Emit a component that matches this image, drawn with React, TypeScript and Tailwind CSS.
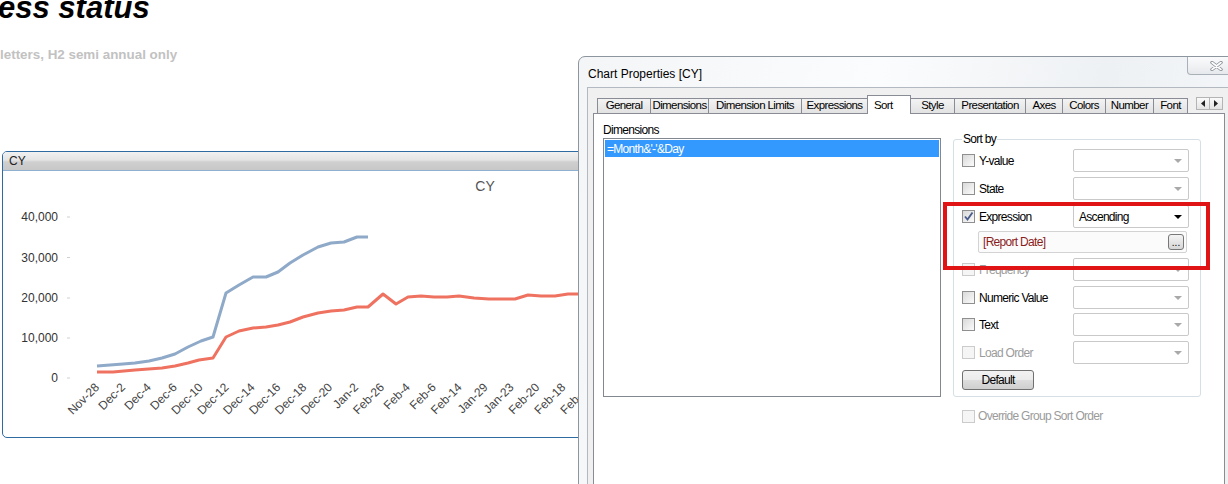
import React from "react";

const bluePts =
  "97,366 110,365 123,364 135,363 149,361 162,358 175,354 188,347 201,341 213,337 226,293 239,285 253,277 266,277 278,272 290,263 303,255 318,247 331,243 344,242 357,237 368,237";
const redPts =
  "97,372 113,372 135,370 162,368 175,366 188,363 199,360 213,358 226,337 239,331 253,328 266,327 278,325 290,322 303,317 318,313 331,311 344,310 357,307 368,307 383,294 396,304 408,297 421,296 434,297 447,297 459,296 474,298 489,299 504,299 515,299 528,295 541,296 555,296 568,294 580,294 610,293";

const xLabels = [
  "Nov-28", "Dec-2", "Dec-4", "Dec-6", "Dec-10", "Dec-12", "Dec-14", "Dec-16", "Dec-18", "Dec-20",
  "Jan-2", "Feb-26", "Feb-4", "Feb-6", "Feb-14", "Jan-29", "Jan-23", "Feb-20", "Feb-18", "Feb-12",
];

const yTicks = [
  { label: "40,000", y: 217 },
  { label: "30,000", y: 257.5 },
  { label: "20,000", y: 298 },
  { label: "10,000", y: 338 },
  { label: "0", y: 378 },
];

const tabs: { name: string; w: number; active?: boolean }[] = [
  { name: "General", w: 53 },
  { name: "Dimensions", w: 58 },
  { name: "Dimension Limits", w: 93 },
  { name: "Expressions", w: 66 },
  { name: "Sort", w: 44, active: true },
  { name: "Style", w: 43 },
  { name: "Presentation", w: 71 },
  { name: "Axes", w: 37 },
  { name: "Colors", w: 43 },
  { name: "Number", w: 48 },
  { name: "Font", w: 35 },
];

function Check({ checked = false, disabled = false }: { checked?: boolean; disabled?: boolean }) {
  return (
    <span
      className={`flex h-[13px] w-[13px] shrink-0 items-center justify-center border ${
        disabled
          ? "border-[#cbcbcb] bg-[#f5f5f5]"
          : "border-[#8e8f8f] bg-gradient-to-br from-[#d9d9d9] to-[#fbfbfb]"
      }`}
    >
      {checked && (
        <svg width="11" height="11" viewBox="0 0 11 11">
          <path d="M2 5.5 L4.5 8.5 L9.5 1.5" fill="none" stroke="#4a5d8c" strokeWidth="1.9" />
        </svg>
      )}
    </span>
  );
}

function Combo({ value = "", active = false }: { value?: string; active?: boolean }) {
  return (
    <div className="flex h-[23px] w-[116px] items-center justify-between rounded-[2px] border border-[#c9c9c9] bg-white pl-[5px] pr-[6px]">
      <span>{value}</span>
      <svg width="8" height="4" viewBox="0 0 8 4">
        <path d="M0 0 H8 L4 4 Z" fill={active ? "#000" : "#a9a9a9"} />
      </svg>
    </div>
  );
}

function SortRow({
  label,
  checked,
  disabled,
  value,
  active,
  className = "",
}: {
  label: string;
  checked?: boolean;
  disabled?: boolean;
  value?: string;
  active?: boolean;
  className?: string;
}) {
  return (
    <div className={`flex items-center ${className}`}>
      <div className="flex w-[111px] items-center gap-[4px]">
        <Check checked={checked} disabled={disabled} />
        <span className={disabled ? "text-[#9b9b9b]" : "text-black"}>{label}</span>
      </div>
      <Combo value={value} active={active} />
    </div>
  );
}

export default function App() {
  return (
    <div className="relative h-[484px] w-[1228px] overflow-hidden bg-white font-['Liberation_Sans',Arial,sans-serif]">
      {/* page behind the dialog */}
      <h1 className="-ml-[2px] -mt-[7px] text-[31px] font-bold italic leading-[30px] text-black">
        ess status
      </h1>
      <p className="mt-[24px] text-[13.4px] font-bold leading-[16px] text-[#c2c2c2]">
        letters, H2 semi annual only
      </p>

      <div className="ml-[2px] mt-[88px] h-[287px] w-[640px] overflow-hidden rounded-[5px] border border-[#2f6aa1]">
        <div className="flex h-[19px] items-center border-b border-[#8fb0cf] bg-[linear-gradient(#f1f1f1,#e4e4e4_45%,#cfcfcf_55%,#c8c8c8)] pl-[6px] text-[12px] text-[#222]">
          CY
        </div>
        <svg width="638" height="266" viewBox="3 171 638 266" className="block">
          <text x="485" y="191" textAnchor="middle" fontSize="14" fill="#555" fontFamily="Liberation Sans, Arial">
            CY
          </text>
          {yTicks.map((t) => (
            <g key={t.label}>
              <text x="58" y={t.y + 4} textAnchor="end" fontSize="12" fill="#333" fontFamily="Liberation Sans, Arial">
                {t.label}
              </text>
              <line x1="67" x2="70" y1={t.y} y2={t.y} stroke="#d0d0d0" />
            </g>
          ))}
          <polyline points={bluePts} fill="none" stroke="#8fa9c8" strokeWidth="3" strokeLinejoin="round" />
          <polyline points={redPts} fill="none" stroke="#ef7261" strokeWidth="3" strokeLinejoin="round" />
          {xLabels.map((l, i) => {
            const x = 100 + i * 25.9;
            return (
              <text
                key={l + i}
                x={x}
                y={388}
                textAnchor="end"
                fontSize="12"
                fill="#444"
                fontFamily="Liberation Sans, Arial"
                transform={`rotate(-45 ${x} 388)`}
              >
                {l}
              </text>
            );
          })}
        </svg>
      </div>

      {/* Chart Properties dialog window */}
      <div className="absolute left-[578px] top-[56px] h-[440px] w-[680px] rounded-t-[7px] border border-[#8d959e] bg-[linear-gradient(100deg,#f3f5f7,#fbfcfd_40%,#eef1f4_70%,#f6f8fa)] text-[12px]">
        <div className="flex h-[30px] items-start pl-[9px] pr-[12px]">
          <span className="mt-[8px] text-black">Chart Properties [CY]</span>
          <div className="ml-auto flex h-[18px] w-[58px] items-center justify-center rounded-b-[4px] border border-t-0 border-[#a9b0b8] bg-gradient-to-b from-[#fbfbfc] to-[#e6e9ec]">
            <svg width="13" height="10" viewBox="0 0 13 10">
              <path d="M2 1.5 L11 8.5 M11 1.5 L2 8.5" stroke="#8b9098" strokeWidth="3.4" strokeLinecap="round" />
              <path d="M2 1.5 L11 8.5 M11 1.5 L2 8.5" stroke="#ffffff" strokeWidth="1.6" strokeLinecap="round" />
            </svg>
          </div>
        </div>

        <div className="ml-[8px] h-[420px] border border-[#b3b9c0] bg-[#f0f0f0] pl-[5px] pt-[7px]">
          {/* tabs */}
          <div className="flex h-[18px] items-end pl-[4px] text-[11.5px] tracking-[-0.6px]">
            {tabs.map((t, i) =>
              t.active ? (
                <div
                  key={t.name}
                  style={{ width: t.w }}
                  className="relative z-10 -mb-px flex h-[19px] items-start border border-b-0 border-[#898c95] bg-white pl-[6px] pt-[1px] text-black"
                >
                  {t.name}
                </div>
              ) : (
                <div
                  key={t.name}
                  style={{ width: t.w }}
                  className={`flex h-[15px] items-center justify-center border-t border-[#898c95] bg-gradient-to-b from-[#f3f3f3] to-[#e2e2e2] text-black ${
                    tabs[i - 1]?.active ? "" : "border-l"
                  } ${i === tabs.length - 1 ? "border-r" : ""}`}
                >
                  {t.name}
                </div>
              )
            )}
            <div className="mb-[3px] ml-[8px] flex self-end">
              <div className="flex h-[13px] w-[14px] items-center justify-center border border-[#b4b4b4] bg-gradient-to-b from-[#fafafa] to-[#e4e4e4]">
                <svg width="4" height="7" viewBox="0 0 4 7">
                  <path d="M4 0 V7 L0 3.5 Z" fill="#222" />
                </svg>
              </div>
              <div className="-ml-px flex h-[13px] w-[14px] items-center justify-center border border-[#b4b4b4] bg-gradient-to-b from-[#fafafa] to-[#e4e4e4]">
                <svg width="4" height="7" viewBox="0 0 4 7">
                  <path d="M0 0 V7 L4 3.5 Z" fill="#222" />
                </svg>
              </div>
            </div>
          </div>

          {/* tab panel */}
          <div className="flex h-[400px] w-[632px] border border-[#898c95] bg-white tracking-[-0.7px]">
            <div className="pl-[9px] pt-[9px]">
              <div className="mb-[1px] leading-[14px] text-black">Dimensions</div>
              <div className="h-[259px] w-[338px] border border-[#828790] p-px">
                <div className="flex h-[17px] items-center bg-[#3399ff] pl-[2px] text-white">
                  {"=Month&'-'&Day"}
                </div>
              </div>
            </div>

            <div className="ml-[12px] pt-[18px]">
              <fieldset className="w-[248px] rounded-[3px] border border-[#d5dfe5] px-[8px] pb-[6px]">
                <legend className="px-[1px] leading-[14px] text-black">Sort by</legend>
                <SortRow className="mt-[3px]" label="Y-value" />
                <SortRow className="mt-[5px]" label="State" />
                <SortRow className="mt-[5px]" label="Expression" checked value="Ascending" active />
                <div className="ml-[16px] mt-[3px] flex h-[22px] w-[209px] items-center justify-between rounded-[2px] border border-[#d3d3d3] bg-[#fbfbfb] pl-[4px] pr-[2px]">
                  <span className="text-[#8b1c1c]">[Report Date]</span>
                  <div className="flex h-[16px] w-[16px] items-end justify-center rounded-[3px] border border-[#777] bg-gradient-to-b from-[#f4f4f4] to-[#d6d6d6] text-[10px] leading-[12px] tracking-normal">
                    ...
                  </div>
                </div>
                <SortRow className="mt-[5px]" label="Frequency" disabled />
                <SortRow className="mt-[5px]" label="Numeric Value" />
                <SortRow className="mt-[4px]" label="Text" />
                <SortRow className="mt-[5px]" label="Load Order" disabled />
                <button className="mt-[6px] flex h-[20px] w-[72px] items-center justify-center rounded-[3px] border border-[#707070] bg-[linear-gradient(#f2f2f2,#ebebeb_50%,#dddddd_50%,#cfcfcf)] text-black">
                  Default
                </button>
              </fieldset>
              <div className="ml-[9px] mt-[10px] flex items-center gap-[3px]">
                <Check disabled />
                <span className="text-[#9b9b9b]">Override Group Sort Order</span>
              </div>
            </div>
          </div>
        </div>
      </div>

      {/* red highlight annotation */}
      <div className="absolute left-[943px] top-[202px] h-[68px] w-[267px] border-4 border-[#e01414]" />
    </div>
  );
}
